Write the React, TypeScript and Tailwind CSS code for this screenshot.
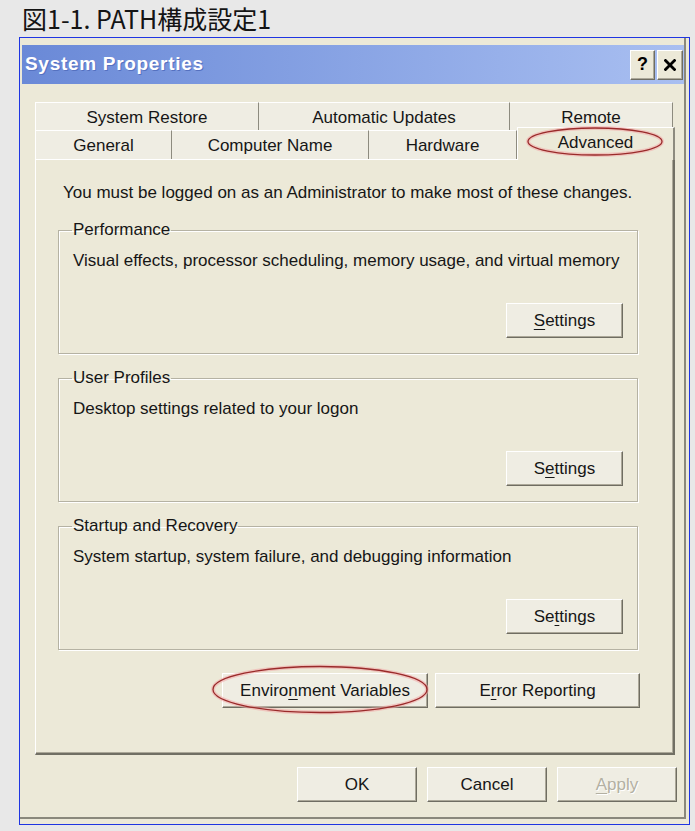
import type { ReactNode } from "react";

// Classic raised 3D push button
const Button = ({
  children,
  className = "",
  disabled = false,
}: {
  children: ReactNode;
  className?: string;
  disabled?: boolean;
}) => (
  <div
    className={`flex items-center justify-center h-[35px] bg-[#efede3] border border-t-white border-l-white border-r-[#6f6d62] border-b-[#6f6d62] shadow-[inset_-1px_-1px_0_#aca899] text-[17px] leading-[18px] ${
      disabled ? "text-[#b3b0a2] [text-shadow:1px_1px_0_#ffffff]" : "text-[#161616]"
    } ${className}`}
  >
    {children}
  </div>
);

const U = ({ children }: { children: ReactNode }) => (
  <span className="underline underline-offset-[3px] decoration-1">{children}</span>
);

const Group = ({ title, text, button }: { title: string; text: string; button: ReactNode }) => (
  <fieldset className="ml-[22px] w-[580px] h-[133px] border border-[#b5b2a3] shadow-[inset_1px_1px_0_#ffffff,1px_1px_0_#ffffff] px-[14px] pb-[15px]">
    <legend className="px-[1px] -ml-[1px] leading-[18px]">{title}</legend>
    <div className="h-[99px] flex flex-col">
      <div className="mt-[13px] leading-[18px]">{text}</div>
      <Button className="mt-auto self-end w-[117px]">{button}</Button>
    </div>
  </fieldset>
);

const Tab = ({ label, w, first = false }: { label: string; w: string; first?: boolean }) => (
  <div
    className={`${w} h-full flex items-center justify-center pt-[2px] bg-[#efede3] border-t border-t-white border-r border-r-[#8d8b7f] ${
      first ? "border-l border-l-white" : ""
    }`}
  >
    {label}
  </div>
);

const TitleButton = ({ children, w }: { children: ReactNode; w: string }) => (
  <div
    className={`${w} h-[30px] flex items-center justify-center bg-[#ece9d8] border border-t-white border-l-white border-r-[#6f6d62] border-b-[#6f6d62] shadow-[inset_-1px_-1px_0_#aca899]`}
  >
    {children}
  </div>
);

export default function App() {
  return (
    <div className="relative w-[695px] h-[831px] overflow-hidden bg-[#e8e8e8] font-['Liberation_Sans',Arial,sans-serif] text-[17px] text-[#161616]">
      <div className="h-[37px] pl-[22px] pt-[2px] text-[25px] leading-[32px] font-['Noto_Sans_CJK_JP','Noto_Sans',sans-serif] text-[#141414]">
        図1-1. PATH構成設定1
      </div>

      {/* dialog window */}
      <div className="ml-[19px] w-[671px] h-[788px] border border-[#1f35e2] bg-[#ece9d8]">
        <div className="w-[666px] h-[781px] flex flex-col pt-[7px] border-r-2 border-b-2 border-[#8a887c]">
          {/* title bar */}
          <div className="ml-[2px] h-[39px] flex items-center bg-linear-to-r from-[#6a89d7] to-[#a9bff1] pl-[3px] pr-[1px]">
            <span className="text-white font-bold text-[19px] tracking-[0.7px] [text-shadow:1px_1px_0_#5571c0]">
              System Properties
            </span>
            <div className="ml-auto flex gap-[2px]">
              <TitleButton w="w-[25px]">
                <span className="font-bold text-[18px] text-black">?</span>
              </TitleButton>
              <TitleButton w="w-[26px]">
                <svg width="12" height="12" viewBox="0 0 12 12">
                  <path d="M1.5 1.5 L10.5 10.5 M10.5 1.5 L1.5 10.5" stroke="#000" strokeWidth="2.8" strokeLinecap="square" />
                </svg>
              </TitleButton>
            </div>
          </div>

          {/* tabs */}
          <div className="ml-[15px] mr-[9px] mt-[18px]">
            <div className="flex h-[28px] mr-[2px]">
              <Tab label="System Restore" w="w-[224px]" first />
              <Tab label="Automatic Updates" w="w-[251px]" />
              <Tab label="Remote" w="w-[163px]" />
            </div>
            <div className="flex h-[29px] items-end">
              <Tab label="General" w="w-[137px]" first />
              <Tab label="Computer Name" w="w-[197px]" />
              <Tab label="Hardware" w="w-[148px]" />
              <div className="relative z-10 w-[158px] h-[33px] -mb-[1px] flex items-center justify-center pb-[3px] bg-[#ece9d8] border-t border-t-white border-l border-l-white border-r-2 border-r-[#8d8b7f]">
                Advanced
              </div>
            </div>

            {/* tab page */}
            <div className="h-[596px] border-t border-l border-t-white border-l-white border-r-2 border-b-2 border-r-[#716f64] border-b-[#716f64] shadow-[inset_-1px_-1px_0_#aca899]">
              <div className="pt-[24px] pl-[27px] leading-[18px]">
                You must be logged on as an Administrator to make most of these changes.
              </div>
              <div className="mt-[19px] flex flex-col gap-[15px]">
                <Group
                  title="Performance"
                  text="Visual effects, processor scheduling, memory usage, and virtual memory"
                  button={
                    <>
                      <U>S</U>ettings
                    </>
                  }
                />
                <Group
                  title="User Profiles"
                  text="Desktop settings related to your logon"
                  button={
                    <>
                      S<U>e</U>ttings
                    </>
                  }
                />
                <Group
                  title="Startup and Recovery"
                  text="System startup, system failure, and debugging information"
                  button={
                    <>
                      Se<U>t</U>tings
                    </>
                  }
                />
              </div>
              <div className="mt-[23px] mr-[33px] flex justify-end gap-[7px]">
                <Button className="w-[206px]">
                  Enviro<U>n</U>ment Variables
                </Button>
                <Button className="w-[205px]">
                  E<U>r</U>ror Reporting
                </Button>
              </div>
            </div>
          </div>

          {/* dialog buttons */}
          <div className="mt-[12px] pr-[7px] flex justify-end gap-[10px]">
            <Button className="w-[120px]">OK</Button>
            <Button className="w-[120px]">Cancel</Button>
            <Button className="w-[120px]" disabled>
              <U>A</U>pply
            </Button>
          </div>
        </div>
      </div>

      {/* hand-drawn highlight rings */}
      <svg className="absolute inset-0 z-20 pointer-events-none" width="695" height="831" viewBox="0 0 695 831">
        <ellipse cx="595" cy="141.5" rx="67" ry="13.5" fill="none" stroke="#f2a8a8" strokeWidth="4" opacity="0.55" />
        <ellipse cx="595" cy="141.5" rx="67" ry="13.5" fill="none" stroke="#9a2a2a" strokeWidth="1.3" />
        <ellipse cx="320" cy="689.5" rx="107" ry="23" fill="none" stroke="#f2a8a8" strokeWidth="4" opacity="0.55" />
        <ellipse cx="320" cy="689.5" rx="107" ry="23" fill="none" stroke="#9a2a2a" strokeWidth="1.3" />
      </svg>
    </div>
  );
}
